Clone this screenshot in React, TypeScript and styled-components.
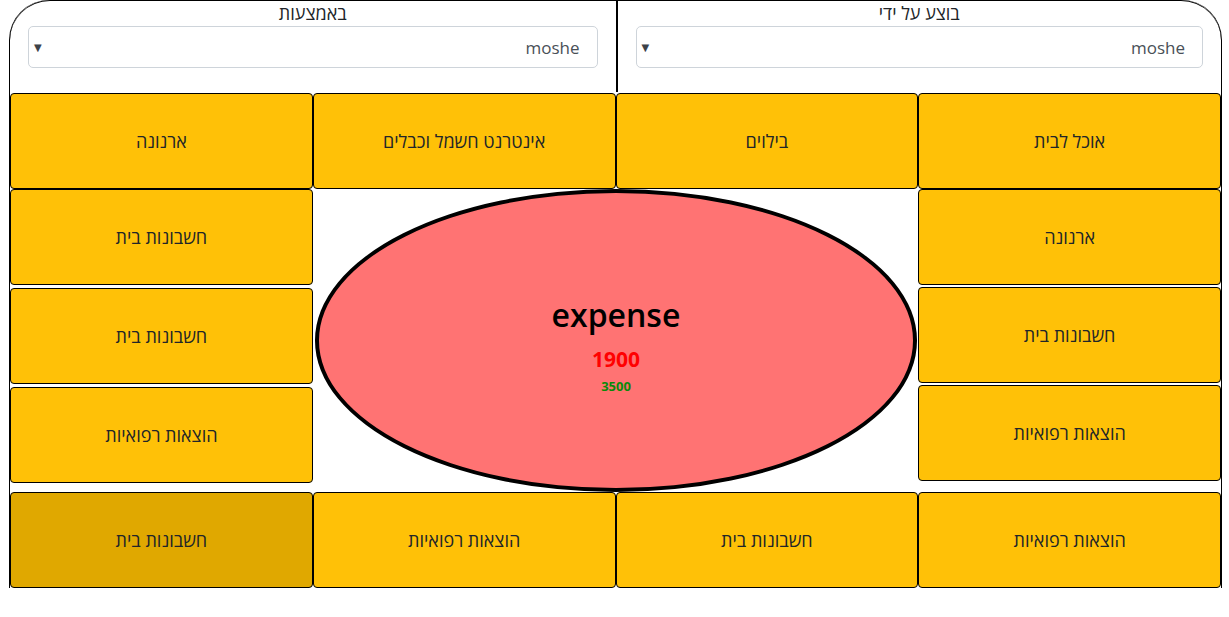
import React from "react";
import styled, { createGlobalStyle } from "styled-components";

const Global = createGlobalStyle`
  html, body { margin: 0; padding: 0; background: #ffffff; }
  body { font-family: "Open Sans", "Noto Sans", "DejaVu Sans", sans-serif; color: #212529; }
  * { box-sizing: border-box; }
`;

const Frame = styled.div`
  direction: rtl;
  width: 1213px;
  margin-left: 9px;
  border-left: 1px solid #000;
  border-right: 1px solid #000;
  border-top-left-radius: 40px;
  border-top-right-radius: 40px;
  min-height: 588px;
`;

const Header = styled.div`
  display: grid;
  grid-template-columns: 1fr 1fr;
  height: 92px;
  border-top: 1px solid #000;
  border-top-left-radius: 40px;
  border-top-right-radius: 40px;
`;

const Field = styled.div<{ $divider?: boolean }>`
  display: flex;
  flex-direction: column;
  align-items: stretch;
  padding: 0 18px;
  border-left: ${(p) => (p.$divider ? "2px solid #000" : "none")};
`;

const Label = styled.div`
  text-align: center;
  font-size: 18px;
  line-height: 26px;
  height: 26px;
  color: #212529;
  margin-top: -1px;
`;

const SelectWrap = styled.div`
  position: relative;
  height: 42px;
`;

const Select = styled.select`
  appearance: none;
  -webkit-appearance: none;
  width: 100%;
  height: 42px;
  border: 1px solid #ced4da;
  border-radius: 5px;
  background: #fff;
  color: #495057;
  font-family: inherit;
  font-size: 17px;
  padding: 0 17px 0 30px;
  direction: rtl;
  text-align: right;
`;

const Arrow = styled.span`
  position: absolute;
  left: 6px;
  top: 14px;
  font-size: 10px;
  color: #3d4248;
  pointer-events: none;
`;

const Board = styled.div`
  display: grid;
  grid-template-columns: repeat(4, 1fr);
  grid-template-rows: 96px 303px 96px;
  margin-top: 1px;
`;

const Tile = styled.button<{ $active?: boolean }>`
  background: ${(p) => (p.$active ? "#e0a800" : "#ffc107")};
  border: 1px solid #000;
  border-radius: 4px;
  font-family: inherit;
  font-size: 18px;
  color: #212529;
  direction: rtl;
  cursor: pointer;
  height: 96px;
  width: 100%;
  padding: 0;
`;

const Side = styled.div<{ $gap: number }>`
  display: flex;
  flex-direction: column;
  gap: ${(p) => p.$gap}px;
`;

const Center = styled.div`
  grid-column: span 2;
  display: flex;
  align-items: stretch;
  justify-content: stretch;
  padding: 0 1px 0 2px;
`;

const Ellipse = styled.div`
  flex: 1;
  border: 4px solid #000;
  border-radius: 50%;
  background: #ff7373;
  display: flex;
  flex-direction: column;
  align-items: center;
  justify-content: center;
  padding-top: 8px;
  direction: ltr;
`;

const Title = styled.div`
  font-size: 32px;
  font-weight: 600;
  color: #000;
  line-height: 40px;
`;

const Spent = styled.div`
  font-size: 21px;
  font-weight: 700;
  color: #ff0000;
  line-height: 28px;
  margin-top: 10px;
`;

const Budget = styled.div`
  font-size: 13px;
  font-weight: 700;
  color: #0a8a0a;
  line-height: 18px;
  margin-top: 4px;
`;

const BottomRow = styled.div`
  grid-column: span 4;
  display: grid;
  grid-template-columns: repeat(4, 1fr);
`;

export default function App() {
  return (
    <>
      <Global />
      <Frame>
        <Header>
          <Field $divider>
            <Label>בוצע על ידי</Label>
            <SelectWrap>
              <Select defaultValue="moshe">
                <option value="moshe">moshe</option>
              </Select>
              <Arrow>▼</Arrow>
            </SelectWrap>
          </Field>
          <Field>
            <Label>באמצעות</Label>
            <SelectWrap>
              <Select defaultValue="moshe">
                <option value="moshe">moshe</option>
              </Select>
              <Arrow>▼</Arrow>
            </SelectWrap>
          </Field>
        </Header>
        <Board>
          <Tile>אוכל לבית</Tile>
          <Tile>בילוים</Tile>
          <Tile>אינטרנט חשמל וכבלים</Tile>
          <Tile>ארנונה</Tile>
          <Side $gap={2}>
            <Tile>ארנונה</Tile>
            <Tile>חשבונות בית</Tile>
            <Tile>הוצאות רפואיות</Tile>
          </Side>
          <Center>
            <Ellipse>
              <Title>expense</Title>
              <Spent>1900</Spent>
              <Budget>3500</Budget>
            </Ellipse>
          </Center>
          <Side $gap={3}>
            <Tile>חשבונות בית</Tile>
            <Tile>חשבונות בית</Tile>
            <Tile>הוצאות רפואיות</Tile>
          </Side>
          <BottomRow>
            <Tile>הוצאות רפואיות</Tile>
            <Tile>חשבונות בית</Tile>
            <Tile>הוצאות רפואיות</Tile>
            <Tile $active>חשבונות בית</Tile>
          </BottomRow>
        </Board>
      </Frame>
    </>
  );
}
